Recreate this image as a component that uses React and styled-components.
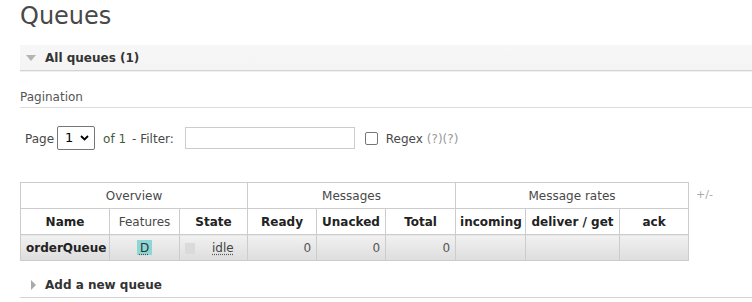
import React from 'react';
import styled, { createGlobalStyle } from 'styled-components';

const GlobalStyle = createGlobalStyle`
  html, body {
    margin: 0;
    background: #fff;
  }
  body {
    font-family: "DejaVu Sans", Verdana, sans-serif;
    font-size: 12px;
    color: #484848;
  }
`;

const Page = styled.main`
  padding: 0 0 0 20px;
  overflow: hidden;
`;

const Title = styled.h1`
  margin: 0;
  font-size: 24px;
  line-height: 33px;
  font-weight: normal;
  color: #484848;
`;

const SectionBar = styled.div`
  display: flex;
  align-items: center;
  gap: 7px;
  height: 25px;
  margin-top: ${p => p.$top}px;
  padding-left: 6px;
  background: ${p => (p.$open ? 'linear-gradient(#f7f7f7, #f4f4f4)' : '#fff')};
  border-bottom: 1px solid #d4d4d4;
  box-shadow: 0 1px 0 #f0f0f0;
  font-weight: bold;
  color: #333;
`;

const Arrow = styled.span`
  display: inline-block;
  width: 0;
  height: 0;
  ${p => p.$down
    ? `border-left: 5px solid transparent;
       border-right: 5px solid transparent;
       border-top: 6px solid #b4b4b4;
       margin-right: 2px;`
    : `border-top: 5px solid transparent;
       border-bottom: 5px solid transparent;
       border-left: 5px solid #aaa;
       margin-left: 5px;
       margin-right: 2px;`}
`;

const SubHeading = styled.div`
  margin-top: 17px;
  line-height: 18px;
  padding-bottom: 1px;
  border-bottom: 1px solid #ddd;
  color: #555;
`;

const Controls = styled.div`
  display: flex;
  align-items: center;
  height: 24px;
  margin-top: 17px;
  padding-left: 5px;
  line-height: 14px;
  padding-top: 2px;
`;

const Select = styled.div`
  display: flex;
  align-items: center;
  justify-content: space-between;
  box-sizing: border-box;
  width: 38px;
  height: 24px;
  margin: -2px 8px 0 3px;
  padding: 0 5px 0 7px;
  border: 1px solid #767676;
  border-radius: 2px;
  color: #000;
  font-size: 13px;
`;

const Muted = styled.span`
  color: ${p => p.$color || '#484848'};
  margin-right: ${p => p.$gap || 0}px;
`;

const FilterInput = styled.input`
  box-sizing: border-box;
  width: 170px;
  height: 22px;
  margin: -2px 10px 0 11px;
  border: 1px solid #ccc;
  padding: 0 4px;
`;

const Check = styled.span`
  box-sizing: border-box;
  width: 13px;
  height: 13px;
  margin: -2px 8px 0 0;
  border: 1px solid #767676;
  border-radius: 2px;
`;

const TableRow = styled.div`
  display: flex;
  align-items: flex-start;
  margin-top: 31px;
`;

const Table = styled.table`
  border-collapse: collapse;
  table-layout: fixed;
  width: 669px;
`;

const Th = styled.th`
  height: 25px;
  padding: 0 4px;
  border: 1px solid #ccc;
  background: #fff;
  font-weight: ${p => (p.$plain ? 'normal' : 'bold')};
  color: ${p => (p.$plain ? '#484848' : '#222')};
  text-align: center;
  white-space: nowrap;
`;

const Td = styled.td`
  height: 25px;
  padding: 0 5px;
  border: 1px solid #ccc;
  background: linear-gradient(#f1f1f1, #dddddd);
  text-align: ${p => p.$align || 'right'};
  font-weight: ${p => (p.$bold ? 'bold' : 'normal')};
  color: ${p => (p.$bold ? '#222' : '#555')};
  white-space: nowrap;
`;

const Badge = styled.abbr`
  display: inline-block;
  padding: 1px 3px 0;
  line-height: 14px;
  background: #8dd6d6;
  color: #333;
  text-decoration: underline dotted #555;
  text-underline-offset: 2px;
`;

const StateWrap = styled.span`
  display: flex;
  align-items: center;
`;

const StatusDot = styled.span`
  width: 10px;
  height: 11px;
  margin-top: 2px;
  background: #dadada;
`;

const Idle = styled.abbr`
  margin-left: 17px;
  color: #444;
  text-decoration: underline dotted #555;
  text-underline-offset: 2px;
`;

const Toggle = styled.span`
  margin: 6px 0 0 7px;
  color: #aaa;
  font-size: 11px;
`;

const cols = [89, 70, 68, 69, 69, 70, 70, 94, 69];

const App = () => (
  <Page>
    <GlobalStyle />
    <Title>Queues</Title>

    <SectionBar $open $top={12}>
      <Arrow $down />
      All queues (1)
    </SectionBar>

    <SubHeading>Pagination</SubHeading>

    <Controls>
      Page
      <Select>
        <span>1</span>
        <svg width="9" height="6" viewBox="0 0 9 6">
          <path d="M1 1l3.5 3.5L8 1" fill="none" stroke="#000" strokeWidth="1.8" />
        </svg>
      </Select>
      <Muted $color="#3f5a3f" $gap={6}>of 1</Muted>
      - Filter:
      <FilterInput />
      <Check />
      <Muted $gap={4}>Regex</Muted>
      <Muted $color="#999">(?)(?)</Muted>
    </Controls>

    <TableRow>
      <Table>
        <colgroup>
          {cols.map((w, i) => <col key={i} style={{ width: w }} />)}
        </colgroup>
        <thead>
          <tr>
            <Th $plain colSpan={3}>Overview</Th>
            <Th $plain colSpan={3}>Messages</Th>
            <Th $plain colSpan={3}>Message rates</Th>
          </tr>
          <tr>
            <Th>Name</Th>
            <Th $plain>Features</Th>
            <Th>State</Th>
            <Th>Ready</Th>
            <Th>Unacked</Th>
            <Th>Total</Th>
            <Th>incoming</Th>
            <Th>deliver / get</Th>
            <Th>ack</Th>
          </tr>
        </thead>
        <tbody>
          <tr>
            <Td $align="left" $bold>orderQueue</Td>
            <Td $align="center"><Badge title="durable: true">D</Badge></Td>
            <Td $align="left">
              <StateWrap>
                <StatusDot />
                <Idle title="idle">idle</Idle>
              </StateWrap>
            </Td>
            <Td>0</Td>
            <Td>0</Td>
            <Td>0</Td>
            <Td />
            <Td />
            <Td />
          </tr>
        </tbody>
      </Table>
      <Toggle>+/-</Toggle>
    </TableRow>

    <SectionBar $top={11}>
      <Arrow />
      Add a new queue
    </SectionBar>
  </Page>
);

export default App;
